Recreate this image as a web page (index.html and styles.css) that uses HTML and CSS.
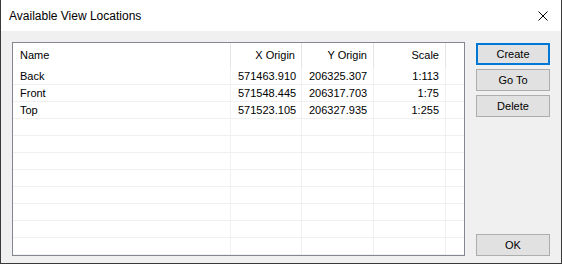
FILE: index.html
```html
<!DOCTYPE html>
<html lang="en">
<head>
    <meta charset="UTF-8">
    <title>Available View Locations</title>
    <link rel="stylesheet" href="styles.css">
</head>
<body>

<div class="window">
    <div class="titlebar">
        <span class="title">Available View Locations</span>
        <span class="close">
            <svg width="10" height="10" viewBox="0 0 10 10">
                <path d="M0.5 0.5 L9.5 9.5 M9.5 0.5 L0.5 9.5" stroke="#000" stroke-width="1" fill="none"/>
            </svg>
        </span>
    </div>

    <div class="dialog-body">
        <!-- List of saved views -->
        <div class="listview">
            <div class="row header">
                <div class="cell">Name</div>
                <div class="cell num">X Origin</div>
                <div class="cell num">Y Origin</div>
                <div class="cell num">Scale</div>
                <div class="cell"></div>
            </div>
            <div class="row">
                <div class="cell">Back</div>
                <div class="cell num">571463.910</div>
                <div class="cell num">206325.307</div>
                <div class="cell num">1:113</div>
                <div class="cell"></div>
            </div>
            <div class="row">
                <div class="cell">Front</div>
                <div class="cell num">571548.445</div>
                <div class="cell num">206317.703</div>
                <div class="cell num">1:75</div>
                <div class="cell"></div>
            </div>
            <div class="row">
                <div class="cell">Top</div>
                <div class="cell num">571523.105</div>
                <div class="cell num">206327.935</div>
                <div class="cell num">1:255</div>
                <div class="cell"></div>
            </div>
            <div class="row"><div class="cell"></div><div class="cell"></div><div class="cell"></div><div class="cell"></div><div class="cell"></div></div>
            <div class="row"><div class="cell"></div><div class="cell"></div><div class="cell"></div><div class="cell"></div><div class="cell"></div></div>
            <div class="row"><div class="cell"></div><div class="cell"></div><div class="cell"></div><div class="cell"></div><div class="cell"></div></div>
            <div class="row"><div class="cell"></div><div class="cell"></div><div class="cell"></div><div class="cell"></div><div class="cell"></div></div>
            <div class="row"><div class="cell"></div><div class="cell"></div><div class="cell"></div><div class="cell"></div><div class="cell"></div></div>
            <div class="row"><div class="cell"></div><div class="cell"></div><div class="cell"></div><div class="cell"></div><div class="cell"></div></div>
            <div class="row"><div class="cell"></div><div class="cell"></div><div class="cell"></div><div class="cell"></div><div class="cell"></div></div>
            <div class="row"><div class="cell"></div><div class="cell"></div><div class="cell"></div><div class="cell"></div><div class="cell"></div></div>
        </div>

        <!-- Buttons -->
        <div class="actions">
            <button class="btn default">Create</button>
            <button class="btn">Go To</button>
            <button class="btn">Delete</button>
            <div class="spacer"></div>
            <button class="btn">OK</button>
        </div>
    </div>
</div>

</body>
</html>
```

FILE: styles.css
```css
body {
    margin: 0;
    padding: 0;
    background-color: #F0F0F0;
    font-family: "Liberation Sans", Arial, sans-serif;
    font-size: 11px;
    color: #000;
}

.window {
    width: 562px;
    height: 264px;
    box-sizing: border-box;
    border: 1px solid #3A3A3A;
    border-top: none;
    display: flex;
    flex-direction: column;
    background-color: #F0F0F0;
}

.titlebar {
    height: 31px;
    flex: none;
    background-color: #FFFFFF;
    display: flex;
    align-items: center;
    justify-content: space-between;
}

.title {
    padding-left: 8px;
    font-size: 12px;
    color: #000;
    margin-top: 1px;
}

.close {
    width: 10px;
    height: 10px;
    margin-right: 13px;
    margin-top: 1px;
    display: flex;
}

.dialog-body {
    flex: 1;
    display: flex;
    gap: 11px;
    padding: 11px 11px 13px 11px;
}

.listview {
    flex: 1;
    background-color: #FFFFFF;
    border: 1px solid #828790;
    overflow: hidden;
}

.row {
    display: grid;
    grid-template-columns: 218px 71px 72px 72px 1fr;
    height: 17px;
    border-bottom: 1px solid #F0F0F0;
    box-sizing: border-box;
}

.row .cell {
    border-right: 1px solid #F0F0F0;
    padding: 0 6px 0 7px;
    line-height: 16px;
    white-space: nowrap;
    overflow: hidden;
}

.row .cell:last-child {
    border-right: none;
}

.row.header {
    height: 25px;
    border-bottom: none;
}

.row.header .cell {
    line-height: 25px;
    border-right-color: #E5E5E5;
}

.num {
    text-align: right;
}

.actions {
    width: 74px;
    display: flex;
    flex-direction: column;
    gap: 4px;
    padding-top: 1px;
}

.spacer {
    flex: 1;
}

.btn {
    height: 22px;
    margin: 0;
    padding: 0;
    font-family: "Liberation Sans", Arial, sans-serif;
    font-size: 11px;
    color: #000;
    background-color: #E1E1E1;
    border: 1px solid #ADADAD;
    box-sizing: border-box;
}

.btn.default {
    border: 2px solid #0078D7;
}
```
